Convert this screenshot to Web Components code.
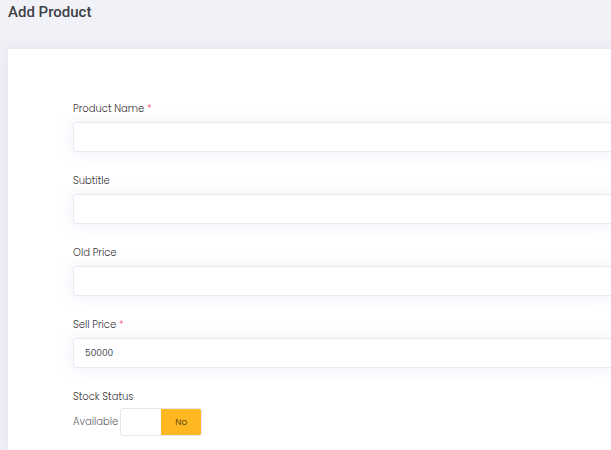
<!DOCTYPE html>
<html lang="en">
<head>
<meta charset="utf-8">
<title>Add Product</title>
<style>
html { background: #f1f2f8; }
body { margin: 0; overflow: hidden; min-height: 100vh; font-family: Poppins, Inter, "Open Sans", sans-serif; font-size: 10px; font-weight: 300; line-height: 16px; color: #3a3238; }
</style>
</head>
<body>
<product-page heading="Add Product">
  <text-field label="Product Name" required></text-field>
  <text-field label="Subtitle"></text-field>
  <text-field label="Old Price"></text-field>
  <text-field label="Sell Price" value="50000" required></text-field>
  <toggle-field label="Stock Status" caption="Available" off-text="No"></toggle-field>
</product-page>
<script>
class ProductPage extends HTMLElement {
  constructor() {
    super();
    this.attachShadow({ mode: 'open' }).innerHTML = `
      <style>
        :host { display: flex; flex-direction: column; min-height: 100vh; }
        h1 { margin: 0; padding: 0 8px 25px; font: 500 15px/24px Roboto, sans-serif; color: #3f4047; }
        form { flex: 1; display: flex; flex-direction: column; gap: 21px; margin-left: 8px; padding: 52px 0 12px 65px; background: #fff; box-shadow: 0 1px 15px 1px rgba(69,65,78,.08); }
      </style>
      <h1></h1>
      <form><slot></slot></form>`;
  }
  connectedCallback() {
    this.shadowRoot.querySelector('h1').textContent = this.getAttribute('heading');
  }
}
class TextField extends HTMLElement {
  constructor() {
    super();
    this.attachShadow({ mode: 'open' }).innerHTML = `
      <style>
        :host { display: flex; flex-direction: column; gap: 5px; }
        .star { color: #f4516c; }
        .star[hidden] { display: none; }
        input { box-sizing: border-box; width: 100%; height: 30px; margin: 0; padding: 0 11px; border: 1px solid #e9eaf1; border-right: 0; border-radius: 3px 0 0 3px; background: #fff; box-shadow: 0 1px 15px 1px rgba(113,106,202,.1); font: inherit; font-size: 9px; font-weight: 400; color: #44464e; outline: 0; }
      </style>
      <label for="box"><span class="name"></span> <span class="star">*</span></label>
      <input id="box" type="text">`;
  }
  connectedCallback() {
    const root = this.shadowRoot, required = this.hasAttribute('required');
    root.querySelector('.name').textContent = this.getAttribute('label');
    root.querySelector('.star').hidden = !required;
    const box = root.querySelector('input');
    box.required = required;
    box.value = this.getAttribute('value') || '';
  }
}
class ToggleField extends HTMLElement {
  constructor() {
    super();
    this.attachShadow({ mode: 'open' }).innerHTML = `
      <style>
        :host { display: flex; flex-direction: column; gap: 3px; }
        .row { display: flex; align-items: center; gap: 2px; color: #61636e; }
        .caption { min-width: 45px; }
        button { box-sizing: border-box; display: grid; grid-template-columns: 1fr 1fr; width: 82px; height: 28px; padding: 0; border: 1px solid #e4e5ec; border-radius: 3px; background: #fff; overflow: hidden; cursor: pointer; }
        .state { display: grid; place-items: center; background: #ffb822; color: #6b4b10; font: 400 9px/16px Poppins, Inter, sans-serif; }
      </style>
      <span id="name"></span>
      <div class="row">
        <span class="caption"></span>
        <button type="button" role="switch" aria-checked="false" aria-labelledby="name"><span></span><span class="state"></span></button>
      </div>`;
  }
  connectedCallback() {
    const root = this.shadowRoot;
    root.querySelector('#name').textContent = this.getAttribute('label');
    root.querySelector('.caption').textContent = this.getAttribute('caption');
    root.querySelector('.state').textContent = this.getAttribute('off-text');
  }
}
customElements.define('product-page', ProductPage);
customElements.define('text-field', TextField);
customElements.define('toggle-field', ToggleField);
</script>
</body>
</html>
